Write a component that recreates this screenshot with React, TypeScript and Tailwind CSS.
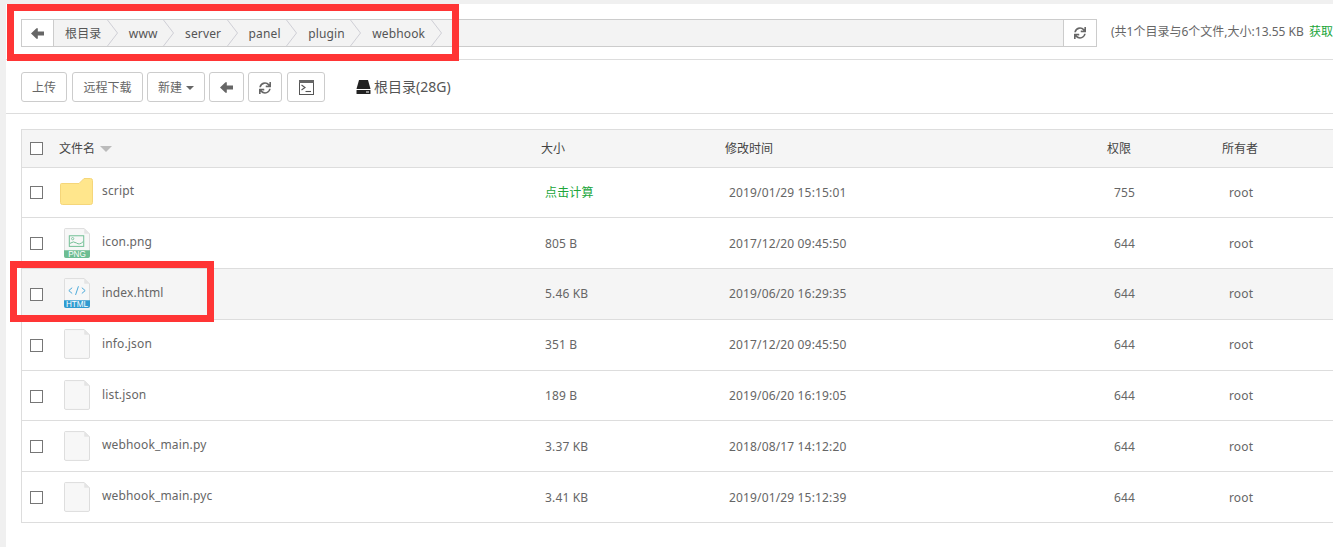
import React from 'react'
import { FaSync } from 'react-icons/fa'

const crumbs = ['根目录', 'www', 'server', 'panel', 'plugin', 'webhook']

type FileRow = {
  name: string
  size: string
  time: string
  perm: string
  kind: 'folder' | 'png' | 'html' | 'file'
  active?: boolean
}

const files: FileRow[] = [
  { name: 'script', size: '点击计算', time: '2019/01/29 15:15:01', perm: '755', kind: 'folder' },
  { name: 'icon.png', size: '805 B', time: '2017/12/20 09:45:50', perm: '644', kind: 'png' },
  { name: 'index.html', size: '5.46 KB', time: '2019/06/20 16:29:35', perm: '644', kind: 'html', active: true },
  { name: 'info.json', size: '351 B', time: '2017/12/20 09:45:50', perm: '644', kind: 'file' },
  { name: 'list.json', size: '189 B', time: '2019/06/20 16:19:05', perm: '644', kind: 'file' },
  { name: 'webhook_main.py', size: '3.37 KB', time: '2018/08/17 14:12:20', perm: '644', kind: 'file' },
  { name: 'webhook_main.pyc', size: '3.41 KB', time: '2019/01/29 15:12:39', perm: '644', kind: 'file' }
]

function ArrowLeft() {
  return (
    <svg width="13" height="11" viewBox="0 0 13 11" fill="#666">
      <path d="M0 5.5 L5.5 0.3 L6.8 0.3 L6.8 3.5 L13 3.5 L13 7.5 L6.8 7.5 L6.8 10.7 L5.5 10.7 Z" />
    </svg>
  )
}

function TerminalIcon() {
  return (
    <svg width="15" height="15" viewBox="0 0 15 15">
      <rect x="0.5" y="0.5" width="14" height="14" fill="#fff" stroke="#555" />
      <rect x="0" y="0" width="15" height="3" fill="#666" />
      <path d="M2.5 5 L6 7.5 L2.5 10" fill="none" stroke="#555" strokeWidth="1.1" />
      <path d="M6.5 11.5 H12" stroke="#555" strokeWidth="1.1" />
    </svg>
  )
}

function DiskIcon() {
  return (
    <svg width="15" height="14" viewBox="0 0 15 14">
      <path d="M3 0 H12 L14.5 9 H0.5 Z" fill="#222" />
      <rect x="0.5" y="10" width="14" height="4" rx="0.5" fill="#222" />
      <rect x="10" y="11.5" width="3" height="1" fill="#fff" />
    </svg>
  )
}

function FileBase({ children }: { children?: React.ReactNode }) {
  return (
    <svg width="26" height="30" viewBox="0 0 27 31">
      <path d="M1.5 0.5 H21 L26.5 6 V29 Q26.5 30.5 25 30.5 H2 Q0.5 30.5 0.5 29 V1.5 Q0.5 0.5 1.5 0.5 Z" fill="#f7f7f7" stroke="#dcdcdc" />
      <path d="M21 0.5 V6 H26.5 Z" fill="#e4e4e4" />
      {children}
    </svg>
  )
}

function FileIcon({ kind }: { kind: FileRow['kind'] }) {
  if (kind === 'folder') {
    return (
      <svg width="33" height="27" viewBox="0 0 33 27">
        <path d="M1.5 5.5 H19 L24 0.5 H30.5 Q32.5 0.5 32.5 2.5 V24.5 Q32.5 26.5 30.5 26.5 H2.5 Q0.5 26.5 0.5 24.5 V6.5 Q0.5 5.5 1.5 5.5 Z" fill="#ffe68c" stroke="#f5d67a" />
      </svg>
    )
  }
  if (kind === 'png') {
    return (
      <FileBase>
        <rect x="5.5" y="8" width="15" height="11" fill="none" stroke="#6dbd92" />
        <circle cx="9" cy="11" r="1.2" fill="none" stroke="#6dbd92" strokeWidth="0.8" />
        <path d="M6 16 Q10 13 13 15.5 T20 14" fill="none" stroke="#6dbd92" />
        <path d="M0 23 H27 V29 Q27 31 25 31 H2 Q0 31 0 29 Z" fill="#6dbd92" />
        <text x="13.5" y="30" textAnchor="middle" fontSize="8.5" fill="#fff" fontFamily="'Liberation Sans', sans-serif">PNG</text>
      </FileBase>
    )
  }
  if (kind === 'html') {
    return (
      <FileBase>
        <path d="M8.5 10 L5 13 L8.5 16 M18.5 10 L22 13 L18.5 16 M15 8.5 L12 17.5" fill="none" stroke="#45a7d9" strokeWidth="1" />
        <path d="M0 23 H27 V29 Q27 31 25 31 H2 Q0 31 0 29 Z" fill="#2f9bd0" />
        <text x="13.5" y="30" textAnchor="middle" fontSize="8.5" fill="#fff" fontFamily="'Liberation Sans', sans-serif">HTML</text>
      </FileBase>
    )
  }
  return <FileBase />
}

function Checkbox() {
  return <span className="block w-[13px] h-[13px] border border-[#767676] bg-white shrink-0" />
}

function ToolButton({ className, children }: { className: string; children: React.ReactNode }) {
  return (
    <button className={`h-[30px] flex items-center justify-center border border-[#ccc] rounded-[3px] bg-white text-[#666] text-xs pt-[1px] ${className}`}>
      {children}
    </button>
  )
}

export default function App() {
  return (
    <div className="relative w-[1333px] h-[547px] overflow-hidden bg-white border-l-[6px] border-t-4 border-[#f0f0f0] text-xs text-[#666] font-['Noto_Sans','Noto_Sans_CJK_SC',sans-serif]">
      {/* address bar */}
      <div className="h-[56px] border-b border-[#ddd] pl-[15px] pt-[15px] flex items-start">
        <div className="w-[1076px] h-[28px] flex border border-[#ccc] bg-[#f3f3f3]">
          <div className="w-[32px] bg-white border-r border-[#ccc] flex items-center justify-center">
            <ArrowLeft />
          </div>
          <div className="flex-1 flex items-stretch">
            {crumbs.map(c => (
              <div key={c} className="flex items-center pl-[11px] text-[#555] tracking-[0.15px]">
                <span className="pt-[1px]">{c}</span>
                <svg className="ml-[5.4px]" width="11" height="26" viewBox="0 0 11 26">
                  <path d="M0.5 0 L10.5 13 L0.5 26" fill="none" stroke="#cfcfd6" />
                </svg>
              </div>
            ))}
          </div>
          <div className="w-[33px] bg-white border-l border-[#ccc] flex items-center justify-center">
            <FaSync size={12} color="#666" />
          </div>
        </div>
        <div className="ml-[14px] mt-[5px] whitespace-nowrap">
          (共1个目录与6个文件,大小:13.55 KB <span className="text-[#20a53a] ml-[2px]">获取</span>
        </div>
      </div>

      {/* toolbar */}
      <div className="h-[54px] border-b border-[#ddd] pl-[15px] pt-[12px] flex items-start">
        <ToolButton className="w-[46px]">上传</ToolButton>
        <ToolButton className="w-[71px] ml-[5px]">远程下载</ToolButton>
        <ToolButton className="w-[58px] ml-[4px] gap-[4px]">
          新建
          <span className="w-0 h-0 border-x-4 border-x-transparent border-t-4 border-t-[#666]" />
        </ToolButton>
        <ToolButton className="w-[35px] ml-[4px]"><ArrowLeft /></ToolButton>
        <ToolButton className="w-[34px] ml-[4px]"><FaSync size={12} color="#666" /></ToolButton>
        <ToolButton className="w-[38px] ml-[5px]"><TerminalIcon /></ToolButton>
        <div className="ml-[31px] h-[30px] flex items-center gap-[3px] text-sm text-[#555]">
          <DiskIcon />
          根目录(28G)
        </div>
      </div>

      {/* file table */}
      <div className="mt-[15px] ml-[15px] border-l border-t border-[#ddd] w-[1400px]">
        <div className="h-[37.5px] pt-[1px] bg-[#f5f5f5] border-b border-[#ddd] flex items-center text-[#444]">
          <div className="w-[37px] pl-[8px]"><Checkbox /></div>
          <div className="w-[482px] flex items-center gap-[5px]">
            文件名
            <span className="w-0 h-0 border-x-[6px] border-x-transparent border-t-[6px] border-t-[#bbb]" />
          </div>
          <div className="w-[184px]">大小</div>
          <div className="w-[382px]">修改时间</div>
          <div className="w-[115px]">权限</div>
          <div>所有者</div>
        </div>
        {files.map(f => (
          <div key={f.name} className={`h-[50.8px] border-b border-[#ddd] flex items-center ${f.active ? 'bg-[#f5f5f5]' : ''}`}>
            <div className="w-[37px] pl-[8px] pt-[1px]"><Checkbox /></div>
            <div className="w-[486px] flex items-center">
              <div className="w-[43px] flex justify-center pr-[8px] -mt-[1px]">
                <FileIcon kind={f.kind} />
              </div>
              <span className="-mt-[2px] text-[#666] tracking-[0.15px]">{f.name}</span>
            </div>
            <div className={`w-[184px] pt-[1px] tracking-[0.15px] ${f.kind === 'folder' ? 'text-[#20a53a]' : ''}`}>{f.size}</div>
            <div className="w-[385px] pt-[1px] tracking-[0.15px]">{f.time}</div>
            <div className="w-[115px] pt-[1px] tracking-[0.15px]">{f.perm}</div>
            <div className="pt-[1px] tracking-[0.15px]">root</div>
          </div>
        ))}
      </div>

      {/* annotation boxes */}
      <div className="absolute left-[1px] top-0 w-[452px] h-[57px] border-[7px] border-[#ff3535]" />
      <div className="absolute left-[4px] top-[257px] w-[204px] h-[61px] border-[7px] border-[#ff3535]" />
    </div>
  )
}
